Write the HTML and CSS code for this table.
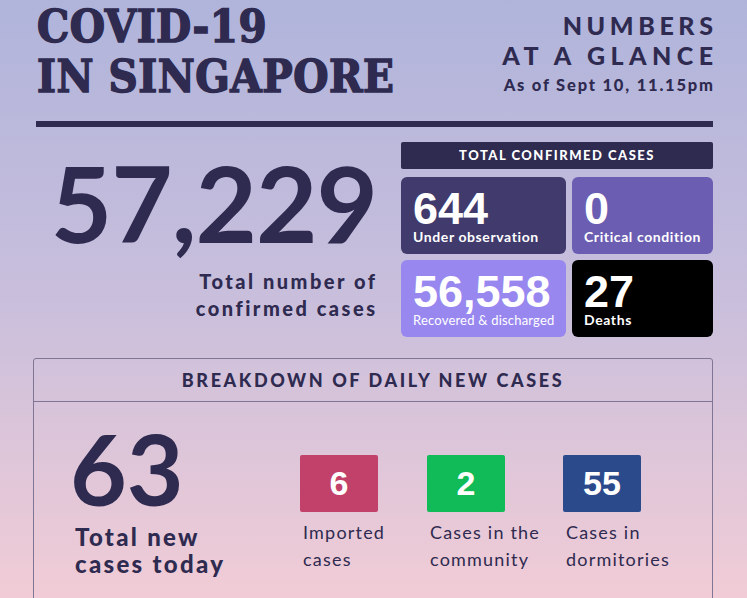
FILE: index.html
```html
<!DOCTYPE html>
<html>
<head>
<meta charset="utf-8">
<link rel="stylesheet" href="styles.css">
</head>
<body>
<div class="page">
  <header class="top">
    <h1 class="title">COVID-19<br>IN SINGAPORE</h1>
    <div class="glance">
      <div class="glance-title">NUMBERS</div>
      <div class="glance-title glance-wide">AT A GLANCE</div>
      <div class="asof">As of Sept 10, 11.15pm</div>
    </div>
  </header>
  <div class="rule"></div>
  <section class="totals">
    <div class="total-left">
      <div class="big">57,229</div>
      <div class="big-label">Total number of<br>confirmed cases</div>
    </div>
    <div class="panel">
      <div class="panel-head">TOTAL CONFIRMED CASES</div>
      <div class="cards">
        <div class="card card-obs"><div class="num">644</div><div class="lbl">Under observation</div></div>
        <div class="card card-crit"><div class="num">0</div><div class="lbl">Critical condition</div></div>
        <div class="card card-rec"><div class="num">56,558</div><div class="lbl lbl-tight">Recovered &amp; discharged</div></div>
        <div class="card card-dead"><div class="num">27</div><div class="lbl">Deaths</div></div>
      </div>
    </div>
  </section>
  <section class="breakdown">
    <div class="bd-head">BREAKDOWN OF DAILY NEW CASES</div>
    <div class="bd-body">
      <div class="new-total">
        <div class="new-num">63</div>
        <div class="new-label">Total new<br>cases today</div>
      </div>
      <div class="item">
        <div class="box box-imp">6</div>
        <div class="item-lbl">Imported<br>cases</div>
      </div>
      <div class="item">
        <div class="box box-com">2</div>
        <div class="item-lbl">Cases in the<br>community</div>
      </div>
      <div class="item">
        <div class="box box-dorm">55</div>
        <div class="item-lbl">Cases in<br>dormitories</div>
      </div>
    </div>
  </section>
</div>
</body>
</html>
```

FILE: styles.css
```css
html, body {
  margin: 0;
  padding: 0;
}
body {
  width: 747px;
  height: 598px;
  overflow: hidden;
  background: linear-gradient(180deg, #b0b4db 0px, #c9bfdc 300px, #f1ccd6 598px);
  color: #2e2a50;
  font-family: "Lato", "Open Sans", sans-serif;
}
.page {
  padding: 0 34px 0 33px;
}
.top {
  display: flex;
  justify-content: space-between;
  align-items: flex-start;
  padding: 2px 0 0 4px;
}
.title {
  margin: 0;
  font-family: "DejaVu Serif Condensed", "DejaVu Serif", serif;
  font-stretch: condensed;
  font-weight: 700;
  font-size: 45px;
  line-height: 50px;
  letter-spacing: 0.5px;
  color: #2e2a50;
  -webkit-text-stroke: 1.4px #2e2a50;
}
.glance {
  margin-top: 8px;
  text-align: right;
}
.glance-title {
  font-size: 25px;
  line-height: 30px;
  font-weight: 900;
  letter-spacing: 4.6px;
  margin-right: -4.6px;
}
.glance-wide {
  letter-spacing: 5.4px;
  margin-right: -5.4px;
}
.asof {
  margin-top: 5px;
  font-size: 16.5px;
  line-height: 20px;
  font-weight: 900;
  letter-spacing: 1.8px;
  margin-right: -1.8px;
}
.rule {
  margin: 19px 0 0 3px;
  height: 6px;
  background: #2e2a50;
}
.totals {
  display: flex;
  margin-top: 15px;
}
.total-left {
  flex: 1;
  padding: 7px 26px 0 0;
  text-align: right;
}
.big {
  font-size: 106px;
  line-height: 106px;
  font-weight: 700;
  letter-spacing: -1px;
  margin-right: -2px;
}
.big-label {
  margin-top: 13px;
  font-size: 20px;
  line-height: 27px;
  font-weight: 900;
  letter-spacing: 2.5px;
  margin-right: -2.5px;
}
.panel {
  width: 312px;
}
.panel-head {
  height: 27px;
  line-height: 27px;
  background: #2e2a50;
  color: #fff;
  text-align: center;
  font-size: 13px;
  font-weight: 900;
  letter-spacing: 1.5px;
  border-radius: 2px;
}
.cards {
  margin-top: 8px;
  display: grid;
  grid-template-columns: 165px 141px;
  grid-auto-rows: 77px;
  gap: 6px;
}
.card {
  border-radius: 6px;
  color: #fff;
  padding: 12px 0 0 12px;
  box-sizing: border-box;
}
.card-obs { background: #413a6c; }
.card-crit { background: #6a5db2; }
.card-rec { background: #9887ef; }
.card-dead { background: #000; }
.num {
  font-family: "Liberation Sans", Arial, sans-serif;
  font-weight: 700;
  font-size: 45px;
  line-height: 40px;
}
.lbl {
  font-size: 14px;
  line-height: 16px;
  font-weight: 700;
  letter-spacing: 0.6px;
}
.lbl-tight {
  font-size: 13px;
  font-weight: 400;
  letter-spacing: 0.2px;
}
.breakdown {
  margin-top: 21px;
  border: 1px solid #7f7594;
  border-radius: 3px;
  height: 300px;
}
.bd-head {
  height: 42px;
  line-height: 42px;
  border-bottom: 1px solid #7f7594;
  text-align: center;
  font-size: 18px;
  font-weight: 900;
  letter-spacing: 2.6px;
}
.bd-body {
  display: grid;
  grid-template-columns: 266px 127px 136px auto;
  align-items: start;
}
.new-total {
  padding: 17px 0 0 36px;
}
.new-num {
  font-size: 98px;
  line-height: 98px;
  font-weight: 700;
}
.new-label {
  margin-top: 6px;
  font-size: 24px;
  line-height: 27px;
  font-weight: 900;
  letter-spacing: 2.3px;
  margin-left: 5px;
}
.item {
  padding-top: 53px;
}
.box {
  width: 78px;
  height: 57px;
  border-radius: 2px;
  color: #fff;
  font-family: "Liberation Sans", Arial, sans-serif;
  font-weight: 700;
  font-size: 34px;
  line-height: 57px;
  text-align: center;
}
.box-imp { background: #c2416a; }
.box-com { background: #10bb58; }
.box-dorm { background: #2b4a8c; }
.item-lbl {
  margin-top: 7px;
  padding-left: 3px;
  font-size: 18px;
  line-height: 27px;
  letter-spacing: 1.2px;
  white-space: nowrap;
}
```
